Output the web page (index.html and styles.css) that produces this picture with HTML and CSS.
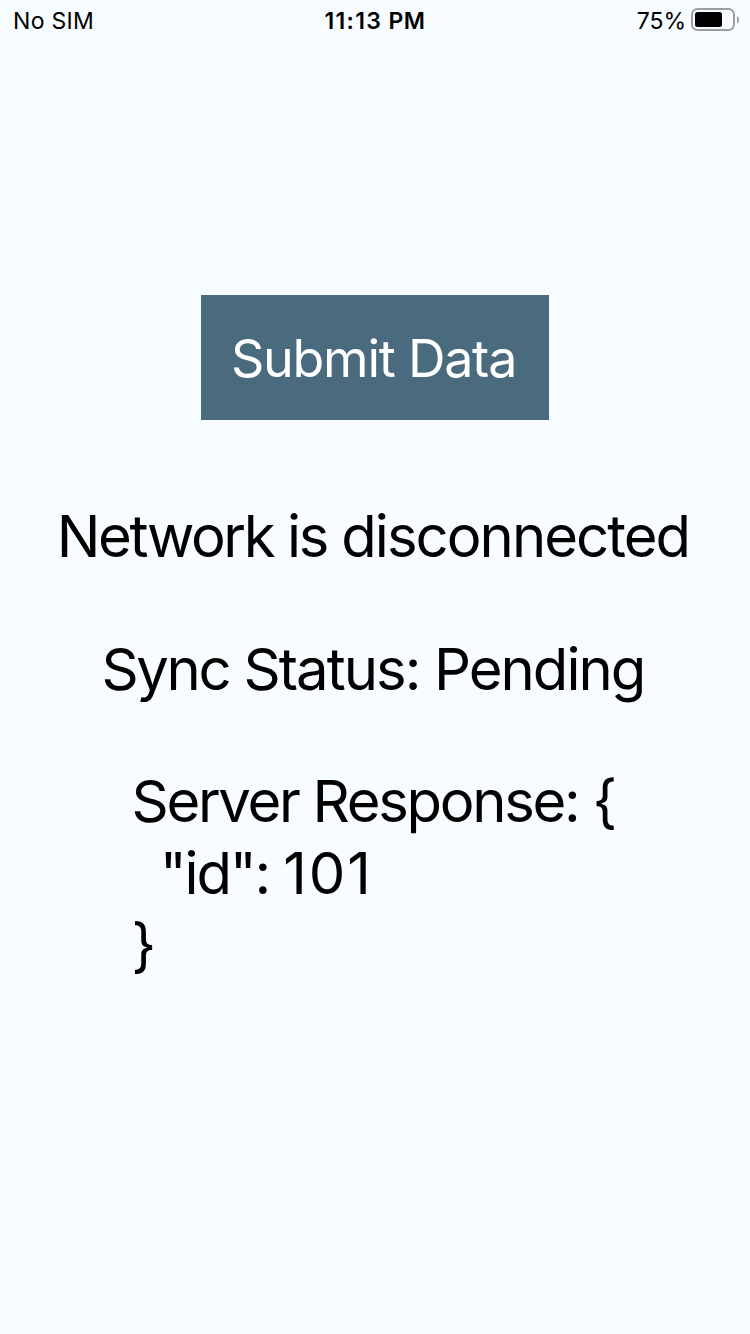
FILE: index.html
```html
<!DOCTYPE html>
<html lang="en">
<head>
<meta charset="utf-8">
<title>Submit Data</title>
<link rel="stylesheet" href="styles.css">
</head>
<body>
<header class="status-bar">
  <span class="carrier">No SIM</span>
  <span class="clock"><span class="time">11:13</span> PM</span>
  <span class="power"><span class="percent">75%</span>
    <svg class="battery" width="49" height="24" viewBox="0 0 49 24">
      <rect x="1" y="1" width="42" height="21" rx="5.500" fill="none" stroke="#9b9fa1" stroke-width="2"/>
      <rect x="4" y="4" width="27" height="15" rx="2.500" fill="#000"/>
      <path d="M46 8c2.700 1.500 2.700 6 0 7.500z" fill="#9b9fa1"/>
    </svg>
  </span>
</header>
<main class="content">
  <button class="submit">Submit Data</button>
  <p class="message network"><span class="tight">Network is</span> disconnected</p>
  <p class="message sync"><span class="tight">Sync</span> Status: Pending</p>
  <pre class="message response"><span class="first">Server Response: {</span>
<span class="second">  "id": <span class="number">101</span></span>
<span>}</span></pre>
</main>
</body>
</html>
```
FILE: styles.css
```css
* { box-sizing: border-box; }
body {
  margin: 0;
  height: 1334px;
  background: #f6fcff;
  color: #000;
  font-family: Inter, "Liberation Sans", sans-serif;
  overflow: hidden;
}
.status-bar {
  display: grid;
  grid-template-columns: 1fr auto 1fr;
  height: 40px;
  padding: 0 10px 0 13px;
  align-items: start;
  font-size: 23px;
  line-height: 42px;
}
.carrier { letter-spacing: 0.3px; }
.clock { font-weight: 600; letter-spacing: 0.5px; padding-right: 3px; }
.time { letter-spacing: 1.3px; }
.power { display: flex; justify-content: flex-end; align-items: flex-start; gap: 5px; }
.battery { display: block; margin-top: 8px; }
.content {
  display: flex;
  flex-direction: column;
  align-items: center;
  padding-top: 255px;
}
.submit {
  width: 348px;
  height: 125px;
  padding: 2px 3px 0 0;
  border: 0;
  background: #4a6b7e;
  color: #fff;
  font: 52px/64px Inter, sans-serif;
  letter-spacing: -1.25px;
  white-space: nowrap;
}
.message {
  margin: 0;
  font: 58px/72px Inter, sans-serif;
  letter-spacing: -1.95px;
  white-space: pre;
}
.network { margin-top: 80px; padding-right: 4px; }
.sync { margin-top: 61px; padding-right: 4px; }
.tight { letter-spacing: -2.4px; }
.response { margin-top: 60px; width: 487px; }
.first { letter-spacing: -2.3px; }
.second { letter-spacing: -2.2px; }
.number { letter-spacing: 2px; }
```
